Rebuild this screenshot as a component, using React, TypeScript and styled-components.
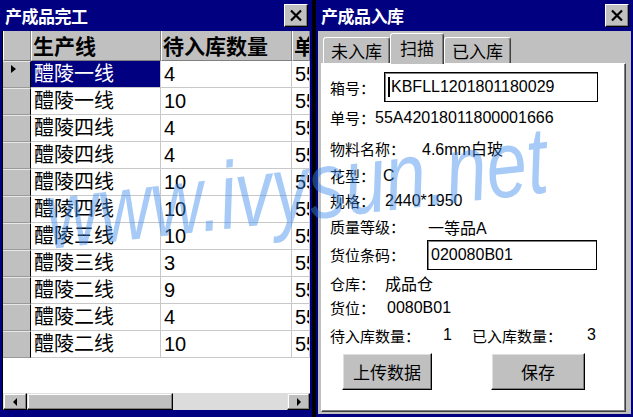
import React from 'react'
import styled, { createGlobalStyle } from 'styled-components'

const FONT = `"Liberation Sans", "Noto Sans CJK SC", sans-serif`

const GlobalStyle = createGlobalStyle`
  html, body {
    margin: 0;
    padding: 0;
    background: #000;
  }
  body {
    width: 633px;
    height: 417px;
    overflow: hidden;
    font-family: ${FONT};
  }
`

const Screen = styled.div`
  position: relative;
  display: flex;
  gap: 4px;
  width: 633px;
  height: 417px;
  overflow: hidden;
`

const Window = styled.div<{ $width: number; $bottom: number }>`
  width: ${({ $width }) => $width}px;
  height: 417px;
  box-sizing: border-box;
  background: #000080;
  padding: 0 2px ${({ $bottom }) => $bottom}px 2px;
  display: flex;
  flex-direction: column;
`

const TitleBar = styled.div`
  height: 31px;
  flex: none;
  display: flex;
  align-items: center;
  justify-content: space-between;
  padding: 0 2px 0 3px;
`

const TitleText = styled.span`
  color: #fff;
  font-family: "Noto Sans CJK SC", sans-serif;
  font-weight: 700;
  font-size: 17px;
  letter-spacing: -0.5px;
`

const CloseButton = styled.div`
  width: 24px;
  height: 23px;
  box-sizing: border-box;
  background: #c0c0c0;
  border: 1px solid;
  border-color: #fff #000 #000 #fff;
  box-shadow: inset -1px -1px #808080;
  display: flex;
  align-items: center;
  justify-content: center;
`

const CloseIcon = () => (
  <svg width="14" height="13" viewBox="0 0 14 13">
    <path d="M2 1.5 L12 11.5 M12 1.5 L2 11.5" stroke="#000" strokeWidth="2.2" />
  </svg>
)

/* ---------- left window: data grid ---------- */

const GridBody = styled.div`
  flex: 1;
  background: #fff;
  border-left: 1px solid #000;
  display: flex;
  flex-direction: column;
  overflow: hidden;
`

const GridRow = styled.div<{ $h: number }>`
  display: flex;
  height: ${({ $h }) => $h}px;
  flex: none;
`

const HeaderCell = styled.div<{ $w?: number }>`
  ${({ $w }) => ($w ? `width: ${$w}px; flex: none;` : 'flex: 1;')}
  box-sizing: border-box;
  background: #c0c0c0;
  border-left: 1px solid #fff;
  border-right: 1px solid #808080;
  border-bottom: 1px solid #808080;
  font-family: "Noto Sans CJK SC", sans-serif;
  font-weight: 700;
  font-size: 21px;
  line-height: 29px;
  padding-left: 1px;
  white-space: nowrap;
  overflow: hidden;
`

const RowHeader = styled.div<{ $current?: boolean }>`
  width: 28px;
  flex: none;
  box-sizing: border-box;
  background: #c0c0c0;
  border-top: 1px solid #e8e8e8;
  border-bottom: 1px solid #9a9a9a;
  border-right: 1px solid #000;
  position: relative;

  &::after {
    content: '';
    display: ${({ $current }) => ($current ? 'block' : 'none')};
    position: absolute;
    left: 8px;
    top: 3px;
    border-left: 5px solid #000;
    border-top: 4px solid transparent;
    border-bottom: 4px solid transparent;
  }
`

const Cell = styled.div<{ $w?: number; $selected?: boolean }>`
  ${({ $w }) => ($w ? `width: ${$w}px; flex: none;` : 'flex: 1;')}
  box-sizing: border-box;
  border-right: 1px solid #c8c8c8;
  border-bottom: 1px solid #c8c8c8;
  background: ${({ $selected }) => ($selected ? '#000080' : '#fff')};
  color: ${({ $selected }) => ($selected ? '#fff' : '#000')};
  font-size: 20px;
  line-height: 26px;
  padding-left: 3px;
  white-space: nowrap;
  overflow: hidden;
`

const GridFiller = styled.div`
  flex: 1;
`

const ScrollBar = styled.div`
  height: 17px;
  flex: none;
  display: flex;
  background: #dcdcdc;
`

const ScrollPart = styled.div<{ $w: number }>`
  width: ${({ $w }) => $w}px;
  flex: none;
  box-sizing: border-box;
  background: #c0c0c0;
  border: 1px solid;
  border-color: #e0e0e0 #000 #000 #e0e0e0;
  box-shadow: inset -1px -1px #808080, inset 1px 1px #fff;
  display: flex;
  align-items: center;
  justify-content: center;
`

const ScrollTrack = styled.div`
  flex: 1;
`

const Arrow = styled.span<{ $dir: 'left' | 'right' }>`
  width: 0;
  height: 0;
  border-top: 4px solid transparent;
  border-bottom: 4px solid transparent;
  ${({ $dir }) => ($dir === 'left' ? 'border-right: 4px solid #000;' : 'border-left: 4px solid #000;')}
`

/* ---------- right window: tabbed form ---------- */

const FormArea = styled.div`
  flex: 1;
  background: #c0c0c0;
  display: flex;
  flex-direction: column;
  padding: 0 5px 2px 3px;
`

const TabStrip = styled.div`
  height: 32px;
  flex: none;
  display: flex;
  align-items: flex-end;
  padding-left: 2px;
`

const Tab = styled.div<{ $active?: boolean }>`
  position: relative;
  z-index: ${({ $active }) => ($active ? 2 : 1)};
  height: ${({ $active }) => ($active ? 31 : 26)}px;
  margin-bottom: ${({ $active }) => ($active ? -1 : 0)}px;
  box-sizing: border-box;
  padding: 0 ${({ $active }) => ($active ? 9 : 7)}px;
  background: ${({ $active }) => ($active ? '#c0c0c0' : '#c0c0c0')};
  border: 1px solid;
  border-bottom: none;
  border-color: #fff #404040 transparent #fff;
  border-radius: 3px 3px 0 0;
  box-shadow: inset -1px 0 #808080;
  font-family: "Noto Sans CJK SC", sans-serif;
  font-size: 17px;
  line-height: ${({ $active }) => ($active ? 28 : 25)}px;
`

const TabPanel = styled.div`
  flex: 1;
  background: #fff;
  border: 1px solid;
  border-color: #fff #404040 #404040 #fff;
  box-shadow: 0 0 0 0 transparent, inset -1px -1px #808080;
  display: flex;
  flex-direction: column;
  padding: 8px 0 0 8px;
`

const FieldRow = styled.div<{ $h: number }>`
  height: ${({ $h }) => $h}px;
  flex: none;
  display: flex;
  align-items: center;
  white-space: nowrap;
`

const Label = styled.span<{ $gap?: number }>`
  font-family: "Noto Sans CJK SC", sans-serif;
  font-size: 15px;
  margin-left: ${({ $gap }) => $gap ?? 0}px;
`

const Value = styled.span<{ $gap?: number }>`
  font-size: 16px;
  margin-left: ${({ $gap }) => $gap ?? 0}px;
`

const InputBox = styled.div<{ $w: number; $gap: number }>`
  width: ${({ $w }) => $w}px;
  height: 30px;
  margin-left: ${({ $gap }) => $gap}px;
  box-sizing: border-box;
  border: 1px solid #000;
  box-shadow: inset 1px 1px #808080;
  display: flex;
  align-items: center;
  padding-left: 3px;
  font-size: 16px;
`

const Caret = styled.span`
  width: 2px;
  height: 20px;
  background: #000;
  margin-right: 1px;
`

const ButtonRow = styled.div`
  display: flex;
  gap: 59px;
  margin-top: 1px;
  padding-left: 12px;
`

const PushButton = styled.div<{ $w: number }>`
  width: ${({ $w }) => $w}px;
  height: 37px;
  box-sizing: border-box;
  background: #c0c0c0;
  border: 1px solid;
  border-color: #fff #000 #000 #fff;
  box-shadow: inset -1px -1px #808080, inset 1px 1px #dfdfdf;
  display: flex;
  align-items: center;
  justify-content: center;
  font-family: "Noto Sans CJK SC", sans-serif;
  font-size: 17px;
`

const Watermark = styled.div`
  position: absolute;
  left: 50px;
  top: 169px;
  font-family: "Liberation Sans", sans-serif;
  font-style: italic;
  font-size: 95px;
  line-height: 1;
  color: rgba(60, 140, 235, 0.45);
  white-space: nowrap;
  pointer-events: none;
  transform-origin: 0 86px;
  transform: rotate(-6.5deg) scaleX(0.77);
`

const rows = [
  ['醴陵一线', '4'],
  ['醴陵一线', '10'],
  ['醴陵四线', '4'],
  ['醴陵四线', '4'],
  ['醴陵四线', '10'],
  ['醴陵四线', '10'],
  ['醴陵三线', '10'],
  ['醴陵三线', '3'],
  ['醴陵二线', '9'],
  ['醴陵二线', '4'],
  ['醴陵二线', '10'],
]

const fields: { label: string; value: string; gap: number; h: number }[] = [
  { label: '单号：', value: '55A42018011800001666', gap: 0, h: 31 },
  { label: '物料名称：', value: '4.6mm白玻', gap: 17, h: 30 },
  { label: '花型：', value: 'C', gap: 8, h: 25 },
  { label: '规格：', value: '2440*1950', gap: 10, h: 25 },
  { label: '质量等级：', value: '一等品A', gap: 23, h: 27 },
]

const App = () => (
  <>
    <GlobalStyle />
    <Screen>
      <Window $width={312} $bottom={7}>
        <TitleBar>
          <TitleText>产成品完工</TitleText>
          <CloseButton>
            <CloseIcon />
          </CloseButton>
        </TitleBar>
        <GridBody>
          <GridRow $h={30}>
            <HeaderCell $w={28} />
            <HeaderCell $w={130}>生产线</HeaderCell>
            <HeaderCell $w={131}>待入库数量</HeaderCell>
            <HeaderCell>单号</HeaderCell>
          </GridRow>
          {rows.map(([line, qty], i) => (
            <GridRow $h={27} key={i}>
              <RowHeader $current={i === 0} />
              <Cell $w={130} $selected={i === 0}>
                {line}
              </Cell>
              <Cell $w={131}>{qty}</Cell>
              <Cell>55A42018011800001666</Cell>
            </GridRow>
          ))}
          <GridFiller />
          <ScrollBar>
            <ScrollPart $w={24}>
              <Arrow $dir="left" />
            </ScrollPart>
            <ScrollPart $w={146} />
            <ScrollTrack />
            <ScrollPart $w={23}>
              <Arrow $dir="right" />
            </ScrollPart>
          </ScrollBar>
        </GridBody>
      </Window>

      <Window $width={317} $bottom={3}>
        <TitleBar>
          <TitleText>产成品入库</TitleText>
          <CloseButton>
            <CloseIcon />
          </CloseButton>
        </TitleBar>
        <FormArea>
          <TabStrip>
            <Tab>未入库</Tab>
            <Tab $active>扫描</Tab>
            <Tab>已入库</Tab>
          </TabStrip>
          <TabPanel>
            <FieldRow $h={30}>
              <Label>箱号：</Label>
              <InputBox $w={214} $gap={9}>
                <Caret />
                KBFLL1201801180029
              </InputBox>
            </FieldRow>
            {fields.map((f) => (
              <FieldRow $h={f.h} key={f.label}>
                <Label>{f.label}</Label>
                <Value $gap={f.gap}>{f.value}</Value>
              </FieldRow>
            ))}
            <FieldRow $h={29}>
              <Label>货位条码：</Label>
              <InputBox $w={170} $gap={22}>
                020080B01
              </InputBox>
            </FieldRow>
            <FieldRow $h={28}>
              <Label>仓库：</Label>
              <Value $gap={10}>成品仓</Value>
            </FieldRow>
            <FieldRow $h={21}>
              <Label>货位：</Label>
              <Value $gap={12}>0080B01</Value>
            </FieldRow>
            <FieldRow $h={34}>
              <Label>待入库数量：</Label>
              <Value $gap={23}>1</Value>
              <Label $gap={20}>已入库数量：</Label>
              <Value $gap={25}>3</Value>
            </FieldRow>
            <ButtonRow>
              <PushButton $w={90}>上传数据</PushButton>
              <PushButton $w={94}>保存</PushButton>
            </ButtonRow>
          </TabPanel>
        </FormArea>
      </Window>
      <Watermark>www.ivysun.net</Watermark>
    </Screen>
  </>
)

export default App
